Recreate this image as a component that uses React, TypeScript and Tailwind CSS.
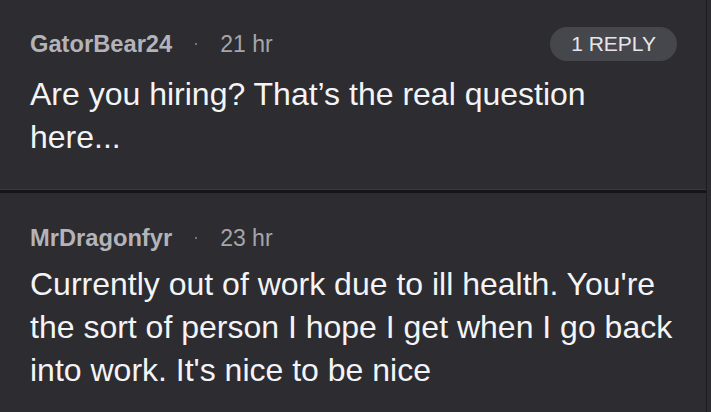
import React from "react";

type Comment = {
    user: string;
    time: string;
    body: string;
    replies?: number;
};

const comments: Comment[] = [
    {
        user: "GatorBear24",
        time: "21 hr",
        body: "Are you hiring? That\u2019s the real question here...",
        replies: 1,
    },
    {
        user: "MrDragonfyr",
        time: "23 hr",
        body: "Currently out of work due to ill health. You're the sort of person I hope I get when I go back into work. It's nice to be nice",
    },
];

function CommentRow({ comment, first }: { comment: Comment; first: boolean }) {
    return (
        <div className={first ? "pl-[30px] pr-[29px] pt-[27px] pb-[30px]" : "pl-[30px] pr-[29px] pt-[32px] pb-[19px]"}>
            <div className={`flex items-center justify-between ${first ? "h-[34px]" : "h-[26px]"}`}>
                <div className="flex items-center leading-[26px]">
                    <span className="text-[23.7px] font-bold text-[#b3b3b9]">{comment.user}</span>
                    <span className="mx-[23px] h-[2px] w-[2px] rounded-full bg-[#8e8e94]" />
                    <span className="text-[23px] text-[#a5a5ab]">{comment.time}</span>
                </div>
                {comment.replies ? (
                    <div className="flex h-[34px] items-center rounded-full bg-[#46474d] px-[21px] text-[21px] text-[#e6e6ea]">
                        {comment.replies} REPLY
                    </div>
                ) : null}
            </div>
            <p className="mt-[12px] text-[32px] leading-[43px] text-[#f4f4f6]">{comment.body}</p>
        </div>
    );
}

export default function App() {
    return (
        <div
            className="flex h-[412px] w-[711px] overflow-hidden bg-[#2c2c31]"
            style={{ fontFamily: '"Liberation Sans", Arial, sans-serif' }}
        >
            <div className="flex w-[707px] flex-col border-r border-[#1c1c1f]">
                <CommentRow comment={comments[0]} first />
                <div className="h-px bg-[#3a3a3f]" />
                <div className="h-[3px] bg-[#151517]" />
                <CommentRow comment={comments[1]} first={false} />
            </div>
        </div>
    );
}
